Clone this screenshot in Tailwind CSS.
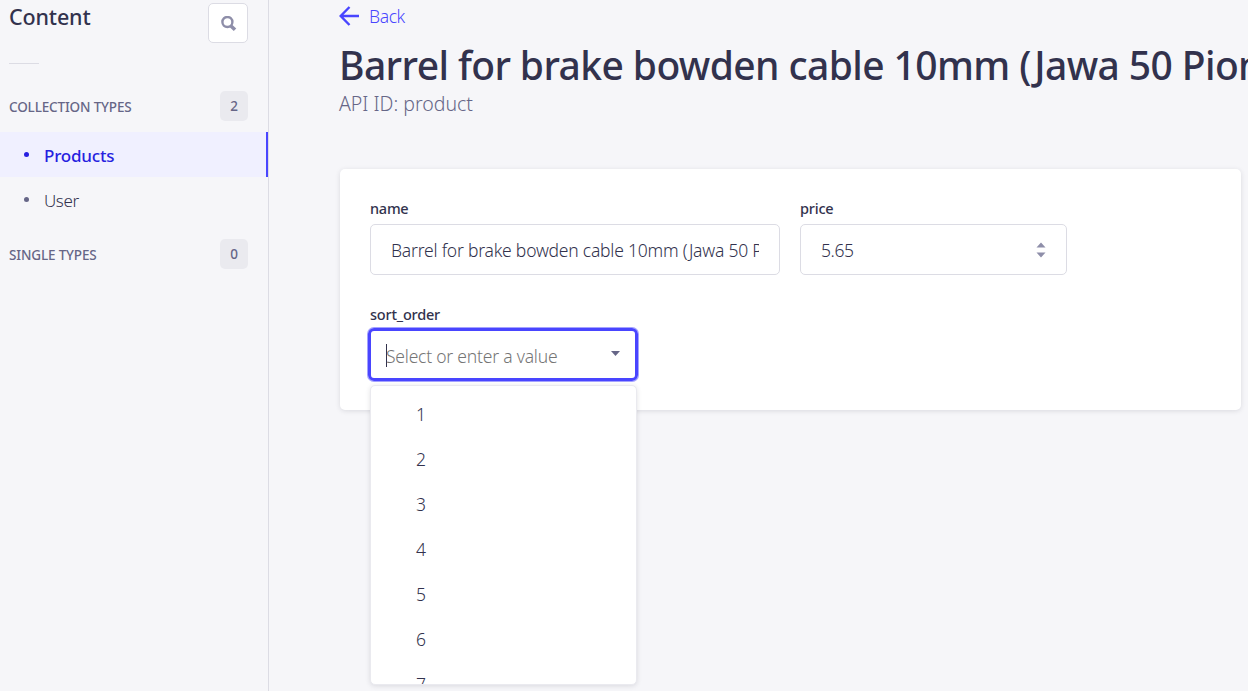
<!DOCTYPE html>
<html lang="en">
<head>
<meta charset="utf-8">
<title>Content Manager</title>
<script src="https://cdn.jsdelivr.net/npm/@tailwindcss/browser@4"></script>
</head>
<body class="flex h-[691px] w-[1248px] overflow-hidden bg-[#f6f6f9] font-['Noto_Sans',sans-serif] font-[350] text-[#32324d]">
  <nav class="h-full w-[269px] shrink-0 border-r border-[#dcdce4]">
    <div class="flex h-[63px] items-start justify-between pt-[3px] pr-5 pl-[9px]">
      <h2 class="text-[21.5px] leading-[28px] font-medium tracking-[-0.15px]">Content</h2>
      <button class="flex size-10 items-center justify-center rounded-[5px] border border-[#dcdce4] bg-white" aria-label="Search">
        <svg class="mt-px ml-px size-4" viewBox="0 0 16 16" fill="none" stroke="#8e8ea9"><circle cx="6.4" cy="6" r="5" stroke-width="2.4"/><path d="M10 10 14 13.8" stroke-width="3.6"/></svg>
      </button>
    </div>
    <hr class="ml-[9px] w-[30px] border-[#dcdce4]">
    <div class="mt-[27px] flex h-[30px] items-center justify-between pr-5 pl-[9px] text-[#666687]">
      <h3 class="pt-0.5 text-[13.5px] font-medium tracking-[-0.15px]">COLLECTION TYPES</h3>
      <span class="flex h-[30px] w-7 items-center justify-center rounded-[5px] bg-[#eaeaef] text-[13.5px] font-medium">2</span>
    </div>
    <ul class="mt-[11px] text-[17px] tracking-[-0.3px]">
      <li class="flex h-[45px] items-center border-r-2 border-[#4945ff] bg-[#f0f0ff] pl-6 font-medium text-[#271fe0]">
        <span class="mr-[15px] size-[5px] rounded-full bg-[#271fe0]"></span><span class="pt-0.5 tracking-[-0.2px]">Products</span>
      </li>
      <li class="flex h-[45px] items-center pl-6">
        <span class="mr-[15px] size-[5px] rounded-full bg-[#666687]"></span><span class="pt-0.5 tracking-[-0.4px]">User</span>
      </li>
    </ul>
    <div class="mt-[17px] flex h-[30px] items-center justify-between pr-5 pl-[9px] text-[#666687]">
      <h3 class="pt-0.5 text-[13.5px] font-medium tracking-[-0.15px]">SINGLE TYPES</h3>
      <span class="flex h-[30px] w-7 items-center justify-center rounded-[5px] bg-[#eaeaef] text-[13.5px] font-medium">0</span>
    </div>
  </nav>
  <main class="min-w-0 flex-1 overflow-hidden pt-[3px] pl-[70px]">
    <a class="flex h-[26px] items-center gap-2.5 text-[17.5px] tracking-[-0.4px] text-[#4945ff]">
      <svg class="size-5" viewBox="0 0 20 20" fill="none" stroke="#4945ff" stroke-width="2.4"><path d="M20 10H2M10.5 1 1.7 10l8.8 9"/></svg>
      <span>Back</span>
    </a>
    <h1 class="mt-[10px] text-[39px] leading-[52px] font-medium tracking-[-0.6px] whitespace-nowrap">Barrel for brake bowden cable 10mm (Jawa 50 Pionier)</h1>
    <p class="text-[19.5px] leading-[26px] text-[#666687]">API ID: product</p>
    <section class="mt-[52px] ml-px h-[241px] w-[901px] rounded-[5px] bg-white px-[30px] pt-[29px] shadow-[0_1px_5px_rgba(33,33,52,0.13)]">
      <div class="flex gap-5">
        <label class="block w-[410px]">
          <span class="block h-[26px] text-[14.5px] leading-[20px] font-medium tracking-[-0.25px]">name</span>
          <span class="flex h-[51px] items-center rounded-[5px] border border-[#dcdce4] px-5">
            <span class="flex-1 overflow-hidden pt-0.5 text-[17.5px] tracking-[-0.22px] whitespace-nowrap">Barrel for brake bowden cable 10mm (Jawa 50 Pionier)</span>
          </span>
        </label>
        <label class="block w-[267px]">
          <span class="block h-[26px] text-[14.5px] leading-[20px] font-medium tracking-[-0.2px]">price</span>
          <span class="flex h-[51px] items-center justify-between rounded-[5px] border border-[#dcdce4] px-5">
            <span class="pt-0.5 text-[17.5px] tracking-[-0.4px]">5.65</span>
            <svg class="mt-px h-4 w-[10px]" viewBox="0 0 10 16" fill="#8e8ea9"><path d="M0.5 5.5 5 0.5l4.5 5zM0.5 10.5h9l-4.5 5z"/></svg>
          </span>
        </label>
      </div>
      <div class="relative mt-[29px] w-[267px]">
        <span class="block h-[24px] text-[14.5px] leading-[20px] font-medium tracking-[-0.2px]">sort_order</span>
        <div class="-mx-[2px] flex h-[53px] w-[270px] items-center justify-between rounded-[6px] border-[3px] border-[#4945ff] pr-[15px] pl-[15px] shadow-[0_0_0_1px_rgba(73,69,255,0.5)]">
          <span class="flex items-center"><span class="mt-px h-[23px] w-px bg-[#32324d]"></span><span class="-ml-px pt-[3px] text-[17.5px] tracking-[-0.22px] text-[#757575]">Select or enter a value</span></span>
          <svg class="mb-[3px] h-[5px] w-[9px]" viewBox="0 0 9 5" fill="#666687"><path d="M0 0h9L4.5 5z"/></svg>
        </div>
        <ul class="absolute top-[81px] left-0 h-[300px] w-[267px] overflow-hidden rounded-[5px] border border-[#eaeaef] bg-white pt-[6px] text-[17.5px] shadow-[0_1px_5px_rgba(33,33,52,0.13)]">
          <li class="flex h-[45px] items-center pl-[45px]">1</li>
          <li class="flex h-[45px] items-center pl-[45px]">2</li>
          <li class="flex h-[45px] items-center pl-[45px]">3</li>
          <li class="flex h-[45px] items-center pl-[45px]">4</li>
          <li class="flex h-[45px] items-center pl-[45px]">5</li>
          <li class="flex h-[45px] items-center pl-[45px]">6</li>
          <li class="flex h-[45px] items-center pl-[45px]">7</li>
        </ul>
      </div>
    </section>
  </main>
</body>
</html>
